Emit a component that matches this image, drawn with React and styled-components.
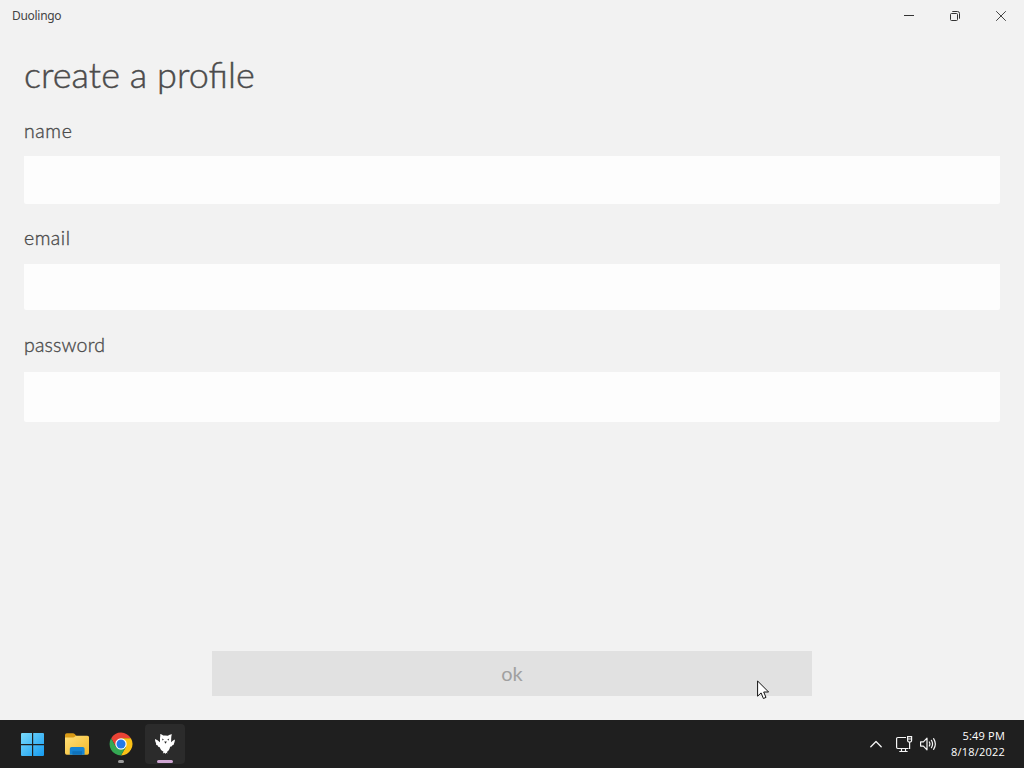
import React from 'react'
import styled, {createGlobalStyle} from 'styled-components'

const fields = [
    {id: 'name', type: 'text', height: 48, gap: 21, labelHeight: 38, spacing: '.6px'},
    {id: 'email', type: 'email', height: 46, gap: 22, labelHeight: 39, spacing: '.5px'},
    {id: 'password', type: 'password', height: 50, gap: 0, labelHeight: 40, spacing: '.2px'},
]

const App = () => (
    <Desktop>
        <GlobalStyle />
        <TitleBar>
            <AppName>Duolingo</AppName>
            <WindowControls>
                <WindowButton aria-label="Minimize"><MinimizeIcon /></WindowButton>
                <WindowButton aria-label="Restore"><RestoreIcon /></WindowButton>
                <WindowButton aria-label="Close"><CloseIcon /></WindowButton>
            </WindowControls>
        </TitleBar>
        <Profile>
            <Heading>create a profile</Heading>
            {fields.map(({id, type, height, gap, labelHeight, spacing}) => (
                <Field key={id} $gap={gap}>
                    <Label htmlFor={id} $height={labelHeight} $spacing={spacing}>{id}</Label>
                    <Input id={id} type={type} $height={height} />
                </Field>
            ))}
            <Submit disabled>ok</Submit>
        </Profile>
        <Taskbar>
            <Apps>
                <Task><StartIcon /></Task>
                <Task><FolderIcon /></Task>
                <Task><ChromeIcon /><Indicator /></Task>
                <Task $active><OwlIcon /><Indicator $active /></Task>
            </Apps>
            <Tray>
                <ChevronIcon />
                <NetworkIcon />
                <SpeakerIcon />
                <Clock>
                    <span>5:49 PM</span>
                    <span>8/18/2022</span>
                </Clock>
            </Tray>
        </Taskbar>
        <Cursor />
    </Desktop>
)

export default App;

const MinimizeIcon = () => (
    <svg width="10" height="10" viewBox="0 0 10 10" stroke="#333">
        <path d="M0 4.5H10" />
    </svg>
)

const RestoreIcon = () => (
    <svg width="10" height="10" viewBox="0 0 10 10" fill="none" stroke="#333">
        <rect x=".5" y="2.5" width="7" height="7" rx="1" />
        <path d="M2.3 .5H7.5Q9.5 .5 9.5 2.5V7.7" />
    </svg>
)

const CloseIcon = () => (
    <svg width="10" height="10" viewBox="0 0 10 10" stroke="#444">
        <path d="M.2 .2L9.8 9.8M9.8 .2L.2 9.8" />
    </svg>
)

const StartIcon = () => (
    <svg width="24" height="24" viewBox=".5 0 24 24">
        <defs>
            <linearGradient id="start" x1="0" y1="0" x2="24" y2="24" gradientUnits="userSpaceOnUse">
                <stop offset="0" stopColor="#7ddcfb" />
                <stop offset="1" stopColor="#149af0" />
            </linearGradient>
        </defs>
        <path fill="url(#start)" d="M1.5 1H11.5V12H.5V2Q.5 1 1.5 1ZM12.7 1H22.5Q23.5 1 23.5 2V12H12.7ZM.5 13.2H11.5V24H1.5Q.5 24 .5 23ZM12.7 13.2H23.5V23Q23.5 24 22.5 24H12.7Z" />
    </svg>
)

const FolderIcon = () => (
    <svg width="24" height="24" viewBox="0 0 24 24">
        <defs>
            <linearGradient id="folder" x1="0" y1="0" x2="1" y2="1">
                <stop offset="0" stopColor="#ffe07a" />
                <stop offset="1" stopColor="#f3b829" />
            </linearGradient>
        </defs>
        <path fill="#d99a16" d="M0 3Q0 1.2 1.8 1.2H8Q9 1.2 9.7 2L11.5 4H22Q24 4 24 6V10H0Z" />
        <path fill="url(#folder)" d="M0 5.6H8.2Q9 5.6 9.8 4.8L11 3.8H22.3Q24 3.8 24 5.6V21Q24 22.8 22.3 22.8H1.7Q0 22.8 0 21Z" />
        <path fill="#1684d3" d="M4.8 22.8V16.8Q4.8 15 6.6 15H17.8Q19.6 15 19.6 16.8V22.8Z" />
        <path fill="#0f72bb" d="M7.4 19.2H17V22.8H7.4Z" />
    </svg>
)

const ChromeIcon = () => (
    <svg width="24" height="24" viewBox="0 0 24 24">
        <path fill="#e94335" d="M2.2 6.2A11.4 11.4 0 0 1 21.9 6.3H12L7 14.9Z" />
        <path fill="#fbc116" d="M21.9 6.3A11.4 11.4 0 0 1 11.9 23.4L16.9 14.9L12 6.3Z" />
        <path fill="#34a853" d="M11.9 23.4A11.4 11.4 0 0 1 2.1 6.3L7 14.9L12 17.7L16.9 14.9Z" />
        <circle cx="12" cy="12" r="5.7" fill="#fff" />
        <circle cx="12" cy="12" r="4.5" fill="#2479e8" />
    </svg>
)

const OwlIcon = () => (
    <svg width="22" height="22" viewBox="0 0 22 22">
        <path fill="#fff" d="M6.2 1Q7.8 1.2 9.2 2.6Q11.6 2.1 13.8 2.8Q15.7 1.1 17.9 1.2Q17 3.4 17.2 5.4L17.1 9.2Q19 7.2 21 6.4Q20.7 9 20.1 10.3L19.5 12L18.4 12.2L17.5 13.6L16.1 13.8Q15.4 17.8 12.9 18.9L13.6 20.4L12.2 19.8L11.3 21L10.5 19.8L8.8 20.4L9.5 18.8Q6.6 17.6 5.5 13.9L4.2 13.8L3.5 12.2L2.2 11.9L2.1 10.4Q.8 8.6 1 6.1Q3.5 6.8 6 9.2V5.2Q6.5 3.4 6.2 1Z" />
        <path fill="#292929" d="M8 5.5L9.9 6.6L8.6 7.4ZM15.2 5.5L13.2 6.7L14.6 7.4ZM10.2 8.5H12.9L11.5 10.7Z" />
    </svg>
)

const ChevronIcon = () => (
    <svg width="12" height="8" viewBox="0 0 12 8" fill="none" stroke="#f5f5f5" strokeWidth="1.3" strokeLinecap="round" strokeLinejoin="round">
        <path d="M.8 6.7L6 1.5L11.2 6.7" />
    </svg>
)

const NetworkSvg = styled.svg`
    margin-left: 14px;
`
const NetworkIcon = () => (
    <NetworkSvg width="17" height="17" viewBox="0 0 17 17" fill="none" stroke="#f5f5f5" strokeWidth="1.2">
        <path d="M10 1.5H1.8Q.6 1.5 .6 2.7V11.3Q.6 12.5 1.8 12.5H12.5M5.5 12.5V15.5M9.5 12.5V15.5M3.3 15.5H11.6" />
        <path d="M11.6 .6H15.6V4.2Q15.6 6 13.6 6Q11.6 6 11.6 4.2ZM11.6 3H15.6M13.6 6V13" />
    </NetworkSvg>
)

const SpeakerSvg = styled.svg`
    margin-left: 7px;
`
const SpeakerIcon = () => (
    <SpeakerSvg width="17" height="14" viewBox="0 0 17 14" fill="none" stroke="#f5f5f5" strokeWidth="1.2" strokeLinecap="round" strokeLinejoin="round">
        <path d="M.6 4.9H3.4L7 1.2V12.8L3.4 9.1H.6Z" />
        <path d="M9.3 5Q10.5 7 9.3 9M11.4 3.3Q13.7 7 11.4 10.7M13.6 1.7Q17.1 7 13.6 12.3" />
    </SpeakerSvg>
)

const Cursor = () => (
    <Pointer width="13" height="20" viewBox="0 0 13 20">
        <path fill="#fff" stroke="#111" d="M.6 1V16.2L4.1 12.9L6.4 18.5L9 17.4L6.7 12H11.6Z" />
    </Pointer>
)

const GlobalStyle = createGlobalStyle`
    * {
        box-sizing: border-box;
    }
    body {
        margin: 0;
        overflow: hidden;
        font-family: 'Lato', 'Open Sans', sans-serif;
    }
    svg {
        display: block;
        flex-shrink: 0;
    }
`

const Desktop = styled.div`
    position: relative;
    display: flex;
    flex-direction: column;
    width: 1024px;
    height: 768px;
    background: #f2f2f2;
`

const TitleBar = styled.header`
    display: flex;
    justify-content: space-between;
    height: 32px;
    padding-left: 12px;
`
const AppName = styled.span`
    font-family: 'Noto Sans', sans-serif;
    font-size: 12px;
    line-height: 32px;
    letter-spacing: -.3px;
    color: #444;
`
const WindowControls = styled.div`
    display: flex;
`
const WindowButton = styled.button`
    display: flex;
    align-items: center;
    justify-content: center;
    width: 46px;
    padding: 0;
    border: none;
    background: none;
`

const Profile = styled.main`
    display: flex;
    flex-direction: column;
    flex: 1;
    padding: 17px 24px 24px;
    color: #4b4b4b;
    font-weight: 300;
`
const Heading = styled.h1`
    margin: 0 0 19px;
    font-size: 36px;
    font-weight: 300;
    line-height: 50px;
    letter-spacing: .04px;
    font-feature-settings: 'liga' 1;
    -webkit-text-stroke: .45px #4b4b4b;
`
const Field = styled.div`
    display: flex;
    flex-direction: column;
    margin-bottom: ${({$gap}) => $gap}px;
`
const Label = styled.label`
    height: ${({$height}) => $height}px;
    font-size: 19.5px;
    line-height: 25px;
    letter-spacing: ${({$spacing}) => $spacing};
    -webkit-text-stroke: .35px #4b4b4b;
`
const Input = styled.input`
    height: ${({$height}) => $height}px;
    padding: 0 12px;
    border: none;
    border-radius: 0 0 2px 2px;
    background: #fdfdfd;
    font: inherit;
`
const Submit = styled.button`
    align-self: center;
    width: 600px;
    height: 45px;
    margin-top: auto;
    padding: 0 0 1px;
    border: none;
    background: #e1e1e1;
    color: #a0a0a0;
    font-family: inherit;
    font-size: 20px;
    line-height: 42px;
`

const Taskbar = styled.footer`
    display: flex;
    justify-content: space-between;
    height: 48px;
    padding: 0 19px 0 13px;
    background: #1f1f1f;
    color: #fff;
`
const Apps = styled.nav`
    display: flex;
    align-items: center;
    gap: 4px;
`
const Task = styled.div`
    position: relative;
    display: flex;
    align-items: center;
    justify-content: center;
    width: 40px;
    height: 40px;
    border-radius: 4px;
    background: ${({$active}) => $active ? '#2b2b2b' : 'none'};
`
const Indicator = styled.span`
    position: absolute;
    bottom: 1px;
    left: 50%;
    width: ${({$active}) => $active ? 16 : 6}px;
    height: 3px;
    border-radius: 2px;
    background: ${({$active}) => $active ? '#cfa6d3' : '#9a9a9a'};
    transform: translateX(-50%);
`
const Tray = styled.div`
    display: flex;
    align-items: center;
`
const Clock = styled.div`
    display: flex;
    flex-direction: column;
    align-items: flex-end;
    width: 68px;
    font-family: 'Open Sans', 'Noto Sans', sans-serif;
    font-size: 11px;
    line-height: 16px;
    letter-spacing: .2px;
    white-space: nowrap;
`

const Pointer = styled.svg`
    position: absolute;
    top: 680px;
    left: 757px;
`
